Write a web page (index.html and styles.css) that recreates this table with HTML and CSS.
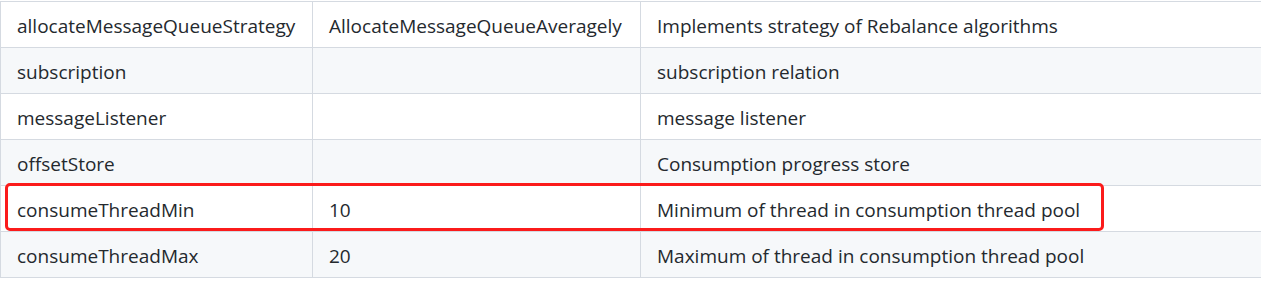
FILE: index.html
```html
<!DOCTYPE html>
<html lang="en">
<head>
<meta charset="utf-8">
<title>Consumer parameters</title>
<link rel="stylesheet" href="styles.css">
</head>
<body>
<div class="wrap">
  <table class="params">
    <colgroup>
      <col class="c1"><col class="c2"><col class="c3">
    </colgroup>
    <tbody>
      <tr><td>allocateMessageQueueStrategy</td><td>AllocateMessageQueueAveragely</td><td>Implements strategy of Rebalance algorithms</td></tr>
      <tr><td>subscription</td><td></td><td>subscription relation</td></tr>
      <tr><td>messageListener</td><td></td><td>message listener</td></tr>
      <tr><td>offsetStore</td><td></td><td>Consumption progress store</td></tr>
      <tr class="marked"><td>consumeThreadMin</td><td>10</td><td>Minimum of thread in consumption thread pool</td></tr>
      <tr><td>consumeThreadMax</td><td>20</td><td>Maximum of thread in consumption thread pool</td></tr>
    </tbody>
  </table>
  <div class="highlight"></div>
</div>
</body>
</html>
```
FILE: styles.css
```css
html, body {
  margin: 0;
  padding: 0;
  background: #ffffff;
  overflow: hidden;
}
.wrap {
  position: relative;
  padding-top: 1px;
}
.params {
  border-collapse: collapse;
  table-layout: fixed;
  width: 100%;
  font-family: "Open Sans", "Noto Sans", "Liberation Sans", sans-serif;
  font-size: 19px;
  color: #24292e;
}
.params col.c1 { width: 312px; }
.params col.c2 { width: 328px; }
.params td {
  border: 1px solid #d5dae1;
  height: 46px;
  padding: 2px 16px 0;
  box-sizing: border-box;
  white-space: nowrap;
  overflow: hidden;
  vertical-align: middle;
}
.params td:last-child {
  border-right: none;
}
.params tr:nth-child(even) td {
  background: #f6f8fa;
}
.highlight {
  position: absolute;
  left: 5px;
  top: 183px;
  width: 1099px;
  height: 48px;
  box-sizing: border-box;
  border: 3px solid #fb1b1b;
  border-radius: 5px;
  pointer-events: none;
}
```
